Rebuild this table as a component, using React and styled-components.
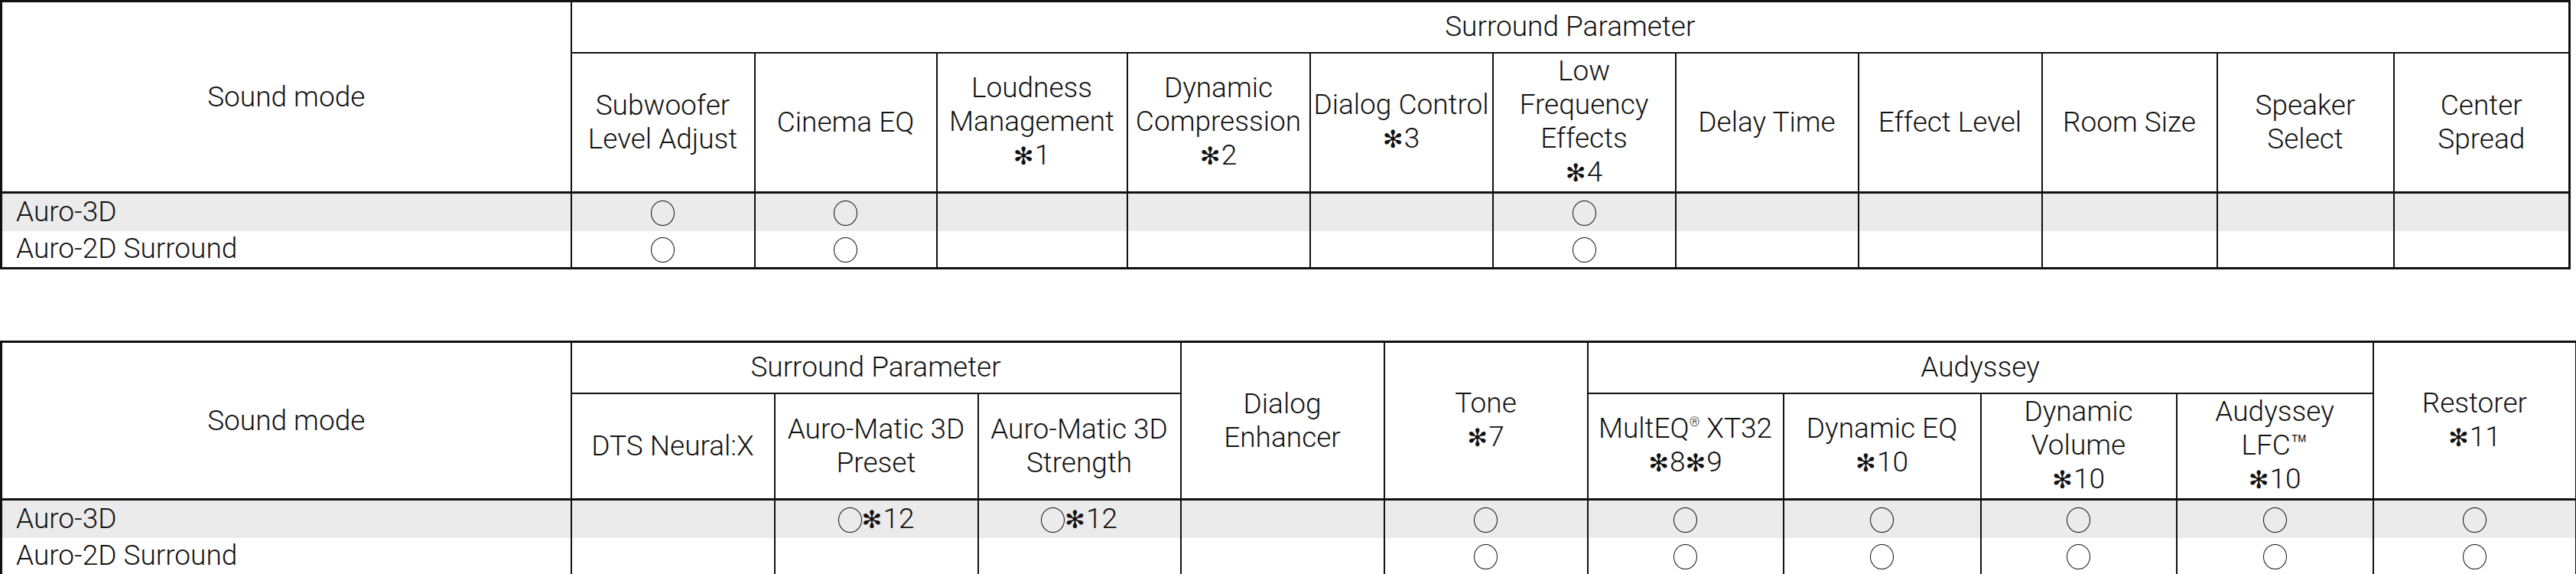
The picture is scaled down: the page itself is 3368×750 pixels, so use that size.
import React from "react";
import styled, { createGlobalStyle } from "styled-components";

const GlobalStyle = createGlobalStyle`
  html, body {
    margin: 0;
    padding: 0;
    background: #ffffff;
  }
  body {
    font-family: Roboto, "Liberation Sans", Arial, sans-serif;
    font-weight: 300;
    color: #111111;
  }
`;

const Page = styled.div`
  display: flex;
  flex-direction: column;
  gap: 93px;
  width: 3368px;
`;

const Table = styled.table`
  border-collapse: collapse;
  table-layout: fixed;
  width: ${(p) => p.$width}px;
  font-size: 37px;
  line-height: 44px;
  border: 3px solid #111111;
`;

const Row = styled.tr`
  height: ${(p) => p.$h}px;
  background: ${(p) => (p.$shade ? "#ebebeb" : "#ffffff")};
`;

const HeadCell = styled.th`
  border: 2px solid #111111;
  border-bottom-width: ${(p) => (p.$last ? 3 : 2)}px;
  padding: 0 2px;
  font-weight: 300;
  text-align: center;
  vertical-align: middle;
  white-space: nowrap;
`;

const Cell = styled.td`
  border-left: 2px solid #111111;
  border-right: 2px solid #111111;
  padding: 0 ${(p) => (p.$mode ? "18px" : "2px")};
  text-align: ${(p) => (p.$mode ? "left" : "center")};
  vertical-align: middle;
  white-space: nowrap;
`;

const Circle = styled.span`
  display: inline-block;
  width: 31px;
  height: 33px;
  box-sizing: border-box;
  border: 1.5px solid #111111;
  border-radius: 50%;
  vertical-align: -6px;
`;

const Star = styled.span`
  font-family: "DejaVu Sans", sans-serif;
  font-size: 32px;
  font-weight: 400;
  margin-right: 1px;
`;

const Reg = styled.sup`
  font-size: 17px;
  line-height: 0;
  vertical-align: 15px;
`;

const Note = ({ n }) => (
  <>
    <Star>✻</Star>
    {n}
  </>
);

// header text: lines separated by "|", "*n" marks a footnote
const renderHead = (text) =>
  text.split("|").map((line, i) => (
    <React.Fragment key={i}>
      {i > 0 && <br />}
      {line.split(/(\*\d+|®)/).map((part, j) => {
        if (part.startsWith("*")) return <Note key={j} n={part.slice(1)} />;
        if (part === "®") return <Reg key={j}>®</Reg>;
        return <React.Fragment key={j}>{part}</React.Fragment>;
      })}
    </React.Fragment>
  ));

const renderMark = (v) => {
  if (!v) return null;
  if (v === "o") return <Circle />;
  return (
    <>
      <Circle />
      <Note n={v.slice(1)} />
    </>
  );
};

const first = {
  cols: [745, 240, 238, 249, 239, 239, 239, 239, 240, 229, 231, 230],
  top: [{ label: "Surround Parameter", span: 11 }],
  sub: [
    "Subwoofer|Level Adjust",
    "Cinema EQ",
    "Loudness|Management|*1",
    "Dynamic|Compression|*2",
    "Dialog Control|*3",
    "Low|Frequency|Effects|*4",
    "Delay Time",
    "Effect Level",
    "Room Size",
    "Speaker|Select",
    "Center|Spread",
  ],
  subHeight: 183,
  rows: [
    { mode: "Auro-3D", marks: ["o", "o", "", "", "", "o", "", "", "", "", ""] },
    { mode: "Auro-2D Surround", marks: ["o", "o", "", "", "", "o", "", "", "", "", ""] },
  ],
};

const second = {
  cols: [745, 266, 266, 265, 266, 266, 256, 258, 256, 257, 266],
  top: [
    { label: "Surround Parameter", span: 3 },
    { label: "Dialog|Enhancer", tall: true },
    { label: "Tone|*7", tall: true },
    { label: "Audyssey", span: 4 },
    { label: "Restorer|*11", tall: true },
  ],
  sub: [
    "DTS Neural:X",
    "Auro-Matic 3D|Preset",
    "Auro-Matic 3D|Strength",
    "MultEQ® XT32|*8*9",
    "Dynamic EQ|*10",
    "Dynamic|Volume|*10",
    "Audyssey|LFC™|*10",
  ],
  subHeight: 139,
  rows: [
    { mode: "Auro-3D", marks: ["", "o12", "o12", "", "o", "o", "o", "o", "o", "o"] },
    { mode: "Auro-2D Surround", marks: ["", "", "", "", "o", "o", "o", "o", "o", "o"] },
  ],
};

const ModeTable = ({ data }) => {
  const width = data.cols.reduce((a, b) => a + b, 0);
  return (
    <Table $width={width}>
      <colgroup>
        {data.cols.map((w, i) => (
          <col key={i} style={{ width: w }} />
        ))}
      </colgroup>
      <thead>
        <Row $h={67}>
          <HeadCell rowSpan={2} $last>
            Sound mode
          </HeadCell>
          {data.top.map((h, i) =>
            h.tall ? (
              <HeadCell key={i} rowSpan={2} $last>
                {renderHead(h.label)}
              </HeadCell>
            ) : (
              <HeadCell key={i} colSpan={h.span}>
                {renderHead(h.label)}
              </HeadCell>
            )
          )}
        </Row>
        <Row $h={data.subHeight}>
          {data.sub.map((h, i) => (
            <HeadCell key={i} $last>
              {renderHead(h)}
            </HeadCell>
          ))}
        </Row>
      </thead>
      <tbody>
        {data.rows.map((r, i) => (
          <Row key={r.mode} $h={i === 0 ? 50 : 49} $shade={i === 0}>
            <Cell $mode>{r.mode}</Cell>
            {r.marks.map((m, j) => (
              <Cell key={j}>{renderMark(m)}</Cell>
            ))}
          </Row>
        ))}
      </tbody>
    </Table>
  );
};

export default function App() {
  return (
    <>
      <GlobalStyle />
      <Page>
        <ModeTable data={first} />
        <ModeTable data={second} />
      </Page>
    </>
  );
}
